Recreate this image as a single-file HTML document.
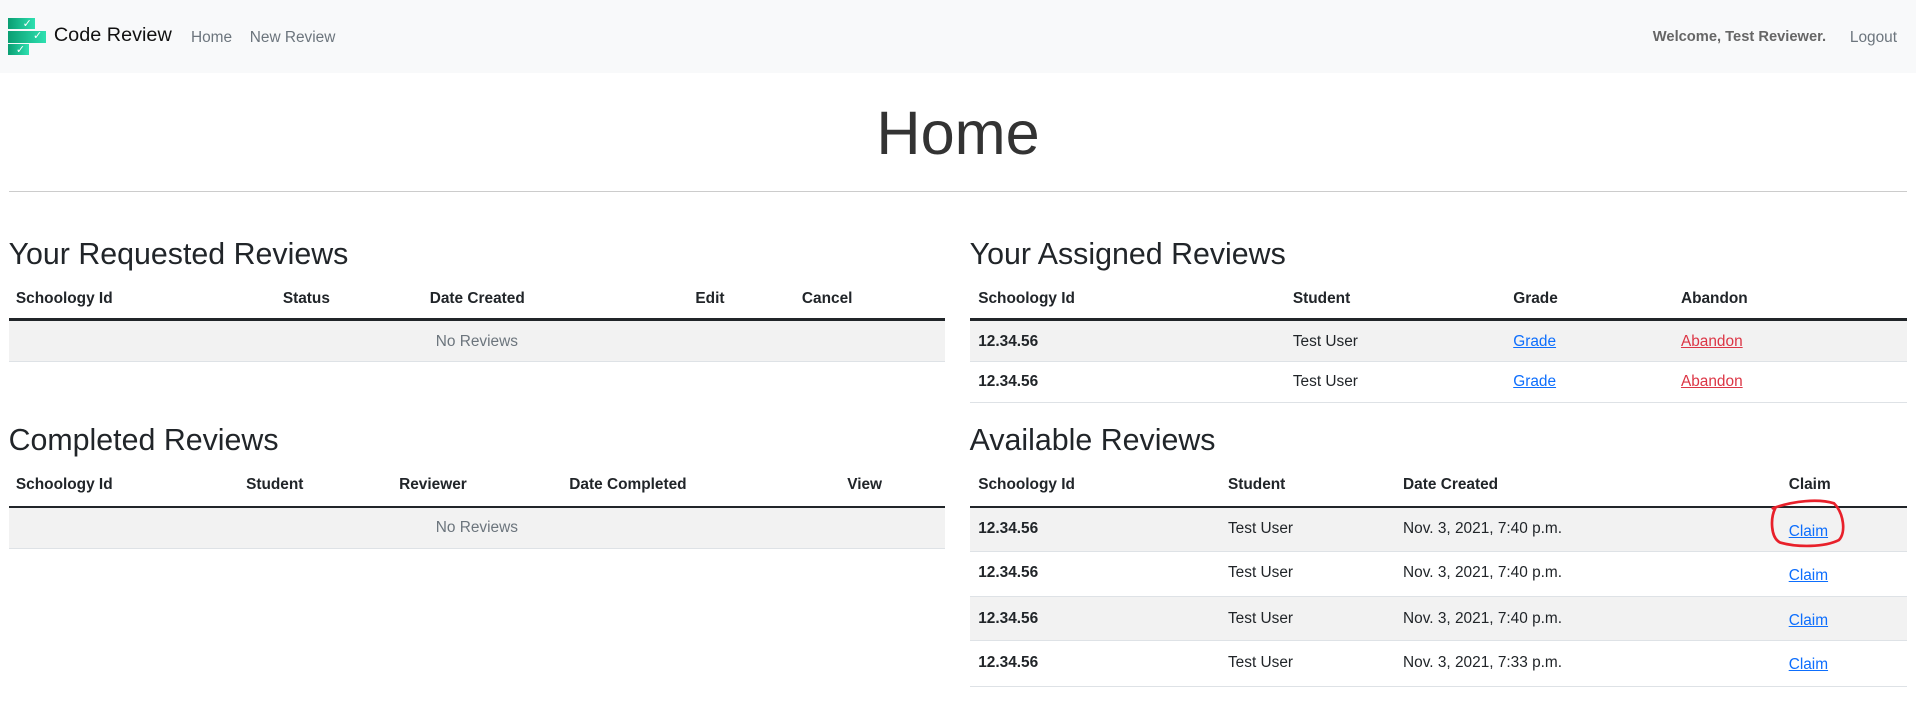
<!DOCTYPE html>
<html><head><meta charset="utf-8"><style>
html,body{margin:0;padding:0;background:#fff;}
body{width:1916px;height:724px;overflow:hidden;font-family:"Liberation Sans",sans-serif;}
#w{zoom:1.2243;width:1565px;height:591px;position:relative;color:#212529;}
.a{position:absolute;white-space:nowrap;}
.nav{position:absolute;left:0;top:0;width:1565px;height:60px;background:#f8f9fa;}
.bar{position:absolute;left:6.5px;background:linear-gradient(90deg,#0a9e72,#2ee0b0);}
.bar span{position:absolute;right:3px;top:-1px;color:#fff;font-size:9px;}
h2{margin:0;font-weight:normal;font-size:24.8px;position:absolute;white-space:nowrap;}
.th{font-weight:bold;font-size:12.6px;}
.td{font-size:12.6px;}
.line{position:absolute;height:2px;background:#212529;}
.row{position:absolute;background:#f2f2f2;border-bottom:1px solid #dee2e6;}
.rw{position:absolute;border-bottom:1px solid #dee2e6;}
a{color:#0d6efd;text-decoration:underline;font-size:12.6px;}
a.r{color:#dc3545;}
</style></head><body><div id="w">
<div class="nav">
 <div class="bar" style="top:15px;width:22.5px;height:9px"><span>✓</span></div>
 <div class="bar" style="top:25px;width:31px;height:10px"><span>✓</span></div>
 <div class="bar" style="top:36px;width:17px;height:9px"><span>✓</span></div>
 <div class="a" style="left:44px;top:20px;font-size:16.2px;color:#111">Code Review</div>
 <div class="a" style="left:156px;top:24px;font-size:12.6px;color:#6c757d">Home</div>
 <div class="a" style="left:204px;top:24px;font-size:12.6px;color:#6c757d">New Review</div>
 <div class="a" style="left:1350px;top:24px;font-size:12px;color:#666;font-weight:bold">Welcome, Test Reviewer.</div>
 <div class="a" style="left:1511px;top:24px;font-size:12.6px;color:#6c757d">Logout</div>
</div>
<div class="a" style="left:0;width:1565px;text-align:center;top:80px;font-size:50px;font-weight:300;color:#333">Home</div>
<div class="a" style="left:7px;top:156px;width:1551px;height:1px;background:#ccc"></div>

<h2 style="left:7px;top:194px">Your Requested Reviews</h2>
<div class="a th" style="left:13px;top:237px">Schoology Id</div>
<div class="a th" style="left:231px;top:237px">Status</div>
<div class="a th" style="left:351px;top:237px">Date Created</div>
<div class="a th" style="left:568px;top:237px">Edit</div>
<div class="a th" style="left:655px;top:237px">Cancel</div>
<div class="line" style="left:7px;top:260px;width:765px"></div>
<div class="row" style="left:7px;top:262px;width:765px;height:33px"></div>
<div class="a td" style="left:7px;width:765px;text-align:center;top:272px;color:#6c757d">No Reviews</div>

<h2 style="left:7px;top:346px">Completed Reviews</h2>
<div class="a th" style="left:13px;top:389px">Schoology Id</div>
<div class="a th" style="left:201px;top:389px">Student</div>
<div class="a th" style="left:326px;top:389px">Reviewer</div>
<div class="a th" style="left:465px;top:389px">Date Completed</div>
<div class="a th" style="left:692px;top:389px">View</div>
<div class="line" style="left:7px;top:413px;width:765px"></div>
<div class="row" style="left:7px;top:415px;width:765px;height:33px"></div>
<div class="a td" style="left:7px;width:765px;text-align:center;top:424px;color:#6c757d">No Reviews</div>

<h2 style="left:792px;top:194px">Your Assigned Reviews</h2>
<div class="a th" style="left:799px;top:237px">Schoology Id</div>
<div class="a th" style="left:1056px;top:237px">Student</div>
<div class="a th" style="left:1236px;top:237px">Grade</div>
<div class="a th" style="left:1373px;top:237px">Abandon</div>
<div class="line" style="left:792px;top:260px;width:766px"></div>
<div class="row" style="left:792px;top:262px;width:766px;height:33px"></div>
<div class="rw" style="left:792px;top:296px;width:766px;height:32px"></div>
<div class="a th" style="left:799px;top:272px">12.34.56</div>
<div class="a td" style="left:1056px;top:272px">Test User</div>
<div class="a td" style="left:1236px;top:272px"><a>Grade</a></div>
<div class="a td" style="left:1373px;top:272px"><a class="r">Abandon</a></div>
<div class="a th" style="left:799px;top:305px">12.34.56</div>
<div class="a td" style="left:1056px;top:305px">Test User</div>
<div class="a td" style="left:1236px;top:305px"><a>Grade</a></div>
<div class="a td" style="left:1373px;top:305px"><a class="r">Abandon</a></div>

<h2 style="left:792px;top:346px">Available Reviews</h2>
<div class="a th" style="left:799px;top:389px">Schoology Id</div>
<div class="a th" style="left:1003px;top:389px">Student</div>
<div class="a th" style="left:1146px;top:389px">Date Created</div>
<div class="a th" style="left:1461px;top:389px">Claim</div>
<div class="line" style="left:792px;top:413px;width:766px"></div>
<div class="row" style="left:792px;top:415px;width:766px;height:35px"></div>
<div class="rw" style="left:792px;top:451px;width:766px;height:36px"></div>
<div class="row" style="left:792px;top:488px;width:766px;height:35px"></div>
<div class="rw" style="left:792px;top:524px;width:766px;height:36px"></div>

<div class="a th" style="left:799px;top:425px">12.34.56</div>
<div class="a td" style="left:1003px;top:425px">Test User</div>
<div class="a td" style="left:1146px;top:425px">Nov. 3, 2021, 7:40 p.m.</div>
<div class="a td" style="left:1461px;top:427px"><a>Claim</a></div>
<div class="a th" style="left:799px;top:461px">12.34.56</div>
<div class="a td" style="left:1003px;top:461px">Test User</div>
<div class="a td" style="left:1146px;top:461px">Nov. 3, 2021, 7:40 p.m.</div>
<div class="a td" style="left:1461px;top:463px"><a>Claim</a></div>
<div class="a th" style="left:799px;top:498px">12.34.56</div>
<div class="a td" style="left:1003px;top:498px">Test User</div>
<div class="a td" style="left:1146px;top:498px">Nov. 3, 2021, 7:40 p.m.</div>
<div class="a td" style="left:1461px;top:500px"><a>Claim</a></div>
<div class="a th" style="left:799px;top:534px">12.34.56</div>
<div class="a td" style="left:1003px;top:534px">Test User</div>
<div class="a td" style="left:1146px;top:534px">Nov. 3, 2021, 7:33 p.m.</div>
<div class="a td" style="left:1461px;top:536px"><a>Claim</a></div>

<svg class="a" style="left:1440px;top:405px" width="75" height="48" viewBox="0 0 75 48">
<path d="M10 10 C6 18 6 34 14 38 C28 42 50 42 62 36 C68 30 66 14 58 6 C45 2 25 4 8 10" fill="none" stroke="#e8202a" stroke-width="2.2" stroke-linecap="round"/>
</svg>
</div></body></html>
